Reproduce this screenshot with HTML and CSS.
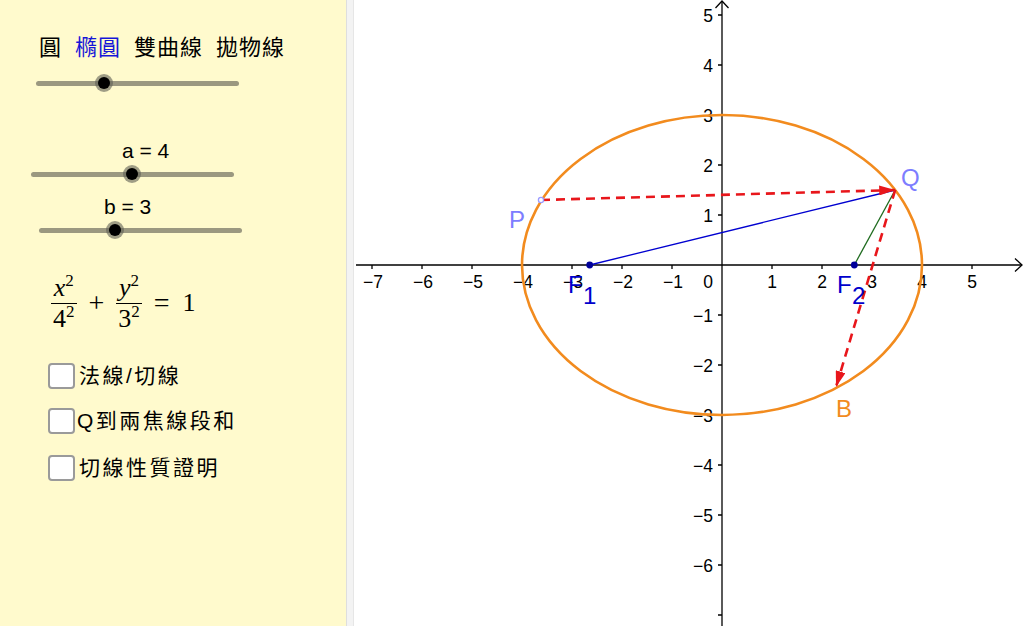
FILE: index.html
```html
<!DOCTYPE html>
<html lang="zh-Hant">
<head>
<meta charset="utf-8">
<title>橢圓</title>
<link rel="stylesheet" href="styles.css">
</head>
<body>
<div class="app">
  <aside class="panel">
    <div class="menu">
      <span>圓</span><span class="active">橢圓</span><span>雙曲線</span><span>拋物線</span>
    </div>
    <div class="slider s1"><div class="track"></div><div class="knob" style="left:33.5%"></div></div>
    <div class="value va">a = 4</div>
    <div class="slider s2"><div class="track"></div><div class="knob" style="left:49.8%"></div></div>
    <div class="value vb">b = 3</div>
    <div class="slider s3"><div class="track"></div><div class="knob" style="left:37.4%"></div></div>
    <div class="formula">
      <span class="frac"><span class="num"><i>x</i><sup>2</sup></span><span class="den">4<sup>2</sup></span></span>
      <span class="op">+</span>
      <span class="frac"><span class="num"><i>y</i><sup>2</sup></span><span class="den">3<sup>2</sup></span></span>
      <span class="op">=</span>
      <span class="one">1</span>
    </div>
    <label class="check c1"><span class="box"></span><span class="ctext">法線/切線</span></label>
    <label class="check c2"><span class="box"></span><span class="ctext">Q到兩焦線段和</span></label>
    <label class="check c3"><span class="box"></span><span class="ctext">切線性質證明</span></label>
  </aside>
  <div class="splitter"></div>
  <main class="canvas">
    <svg class="graph" width="671" height="626" viewBox="353 0 671 626" xmlns="http://www.w3.org/2000/svg">
      <defs>
        <marker id="arr" viewBox="0 0 16 10" refX="16" refY="5" markerWidth="16" markerHeight="10" markerUnits="userSpaceOnUse" orient="auto">
          <path d="M0,0 L16,5 L0,10 z" fill="#e8161b"/>
        </marker>
      </defs>
      <g class="axes" stroke="#000" stroke-width="1.3" fill="none">
        <line x1="355" y1="265" x2="1021" y2="265"/>
        <polyline points="1014,258.5 1021,265 1014,271.5"/>
        <line x1="721" y1="626" x2="721" y2="1"/>
        <polyline points="714.5,8 721,1 727.5,8"/>
        <path d="M371,265v4M421,265v4M471,265v4M521,265v4M571,265v4M621,265v4M671,265v4M771,265v4M821,265v4M871,265v4M921,265v4M971,265v4"/>
        <path d="M717,15h4M717,65h4M717,115h4M717,165h4M717,215h4M717,315h4M717,365h4M717,415h4M717,465h4M717,515h4M717,565h4M717,615h4"/>
      </g>
      <g class="ticks-x" text-anchor="middle">
        <text x="372" y="288">−7</text>
        <text x="422" y="288">−6</text>
        <text x="472" y="288">−5</text>
        <text x="522" y="288">−4</text>
        <text x="572" y="288">−3</text>
        <text x="622" y="288">−2</text>
        <text x="672" y="288">−1</text>
        <text x="707" y="288">0</text>
        <text x="771" y="288">1</text>
        <text x="821" y="288">2</text>
        <text x="871" y="288">3</text>
        <text x="921" y="288">4</text>
        <text x="971" y="288">5</text>
      </g>
      <g class="ticks-y" text-anchor="end">
        <text x="712" y="21.5">5</text>
        <text x="712" y="71.5">4</text>
        <text x="712" y="121.5">3</text>
        <text x="712" y="171.5">2</text>
        <text x="712" y="221.5">1</text>
        <text x="712" y="321.5">−1</text>
        <text x="712" y="371.5">−2</text>
        <text x="712" y="421.5">−3</text>
        <text x="712" y="471.5">−4</text>
        <text x="712" y="521.5">−5</text>
        <text x="712" y="571.5">−6</text>
      </g>
      <ellipse cx="721" cy="265" rx="200" ry="150" fill="none" stroke="#f28b1e" stroke-width="2.6"/>
      <line x1="588.7" y1="265" x2="894.2" y2="190" stroke="#0000d0" stroke-width="1.3"/>
      <line x1="853.3" y1="265" x2="894.2" y2="190" stroke="#1e6b1e" stroke-width="1.3"/>
      <line x1="540" y1="200" x2="894.2" y2="190" stroke="#e8161b" stroke-width="2.6" stroke-dasharray="9,6" marker-end="url(#arr)"/>
      <line x1="894.2" y1="190" x2="835" y2="387" stroke="#e8161b" stroke-width="2.6" stroke-dasharray="9,6" marker-end="url(#arr)"/>
      <circle cx="588.7" cy="265" r="3.4" fill="#00009a"/>
      <circle cx="853.3" cy="265" r="3.4" fill="#00009a"/>
      <circle cx="540" cy="200" r="2.6" fill="#fff" stroke="#9a9aff" stroke-width="1.3"/>
      <g class="lbl">
        <text x="508" y="228" fill="#7d7dff">P</text>
        <text x="900" y="186" fill="#7d7dff">Q</text>
        <text x="567" y="293" fill="#0000cc">F</text>
        <text x="582" y="304" fill="#0000cc">1</text>
        <text x="836" y="293" fill="#0000cc">F</text>
        <text x="851" y="304" fill="#0000cc">2</text>
        <text x="835" y="417" fill="#f28b1e">B</text>
      </g>
    </svg>
  </main>
</div>
</body>
</html>
```
FILE: styles.css
```css
html, body {
  margin: 0;
  padding: 0;
  width: 1024px;
  height: 626px;
  overflow: hidden;
  background: #fff;
}

.app {
  display: flex;
  width: 1024px;
  height: 626px;
}

.panel {
  width: 346px;
  flex: none;
  height: 626px;
  background: #fffacd;
  display: flex;
  flex-direction: column;
  align-items: flex-start;
  font-family: "Liberation Sans", Arial, sans-serif;
  color: #000;
}

.splitter {
  width: 6px;
  flex: none;
  background: #f3f3f3;
  border-left: 1px solid #dedede;
  border-right: 1px solid #e6e6e6;
}

.canvas {
  flex: 1;
  height: 626px;
  background: #fff;
  overflow: hidden;
}

.graph {
  display: block;
}

/* menu */
.menu {
  margin-top: 33px;
  margin-left: 39px;
  height: 24px;
  line-height: 24px;
  display: flex;
  gap: 13px;
  font-family: "Noto Sans CJK TC", "Noto Sans CJK SC", sans-serif;
  font-size: 22px;
  letter-spacing: 1px;
}

.menu .active {
  color: #1515d8;
}

/* sliders */
.slider {
  position: relative;
  width: 203px;
  height: 16px;
}

.slider .track {
  position: absolute;
  left: 0;
  right: 0;
  top: 5.5px;
  height: 5px;
  border-radius: 3px;
  background: #9b9880;
}

.slider .knob {
  position: absolute;
  top: 2px;
  width: 12px;
  height: 12px;
  margin-left: -6px;
  border-radius: 50%;
  background: #000;
  box-shadow: 0 0 0 3px rgba(95, 95, 85, 0.6);
}

.s1 { margin-top: 18px; margin-left: 36px; }
.s2 { margin-top: 3px; margin-left: 31px; }
.s3 { margin-top: 3px; margin-left: 39px; }

.value {
  height: 24px;
  line-height: 24px;
  font-size: 21px;
}

.va { margin-top: 48px; margin-left: 122px; }
.vb { margin-top: 13px; margin-left: 104px; }

/* formula */
.formula {
  margin-top: 34px;
  margin-left: 50px;
  height: 62px;
  display: flex;
  align-items: center;
  font-family: "Liberation Serif", "DejaVu Serif", serif;
  font-size: 26px;
}

.frac {
  display: inline-flex;
  flex-direction: column;
  align-items: center;
  line-height: 28px;
}

.frac .num {
  border-bottom: 1.3px solid #000;
  padding: 0 3px 1px;
}

.frac .den {
  padding: 1px 3px 0;
}

.frac sup {
  font-size: 17px;
  vertical-align: 10px;
  line-height: 0;
}

.formula .op {
  margin: 0 11px;
  font-size: 28px;
}

.formula .one {
  margin-left: 2px;
}

/* checkboxes */
.check {
  display: flex;
  align-items: center;
  height: 26px;
  margin-left: 48px;
}

.c1 { margin-top: 29px; }
.c2 { margin-top: 19px; }
.c3 { margin-top: 21px; }

.box {
  width: 23px;
  height: 22px;
  border: 2px solid #9a9a9a;
  border-radius: 4px;
  background: #fff;
  flex: none;
}

.ctext {
  margin-left: 4px;
  font-family: "Liberation Sans", "Noto Sans CJK TC", sans-serif;
  font-size: 21px;
  letter-spacing: 2.5px;
  line-height: 26px;
}

.c2 .ctext { margin-left: 2px; }

/* graph text */
.ticks-x text, .ticks-y text {
  font-family: "Liberation Sans", Arial, sans-serif;
  font-size: 17.5px;
  fill: #000;
}

.lbl text {
  font-family: "Liberation Sans", Arial, sans-serif;
  font-size: 24px;
}
```
